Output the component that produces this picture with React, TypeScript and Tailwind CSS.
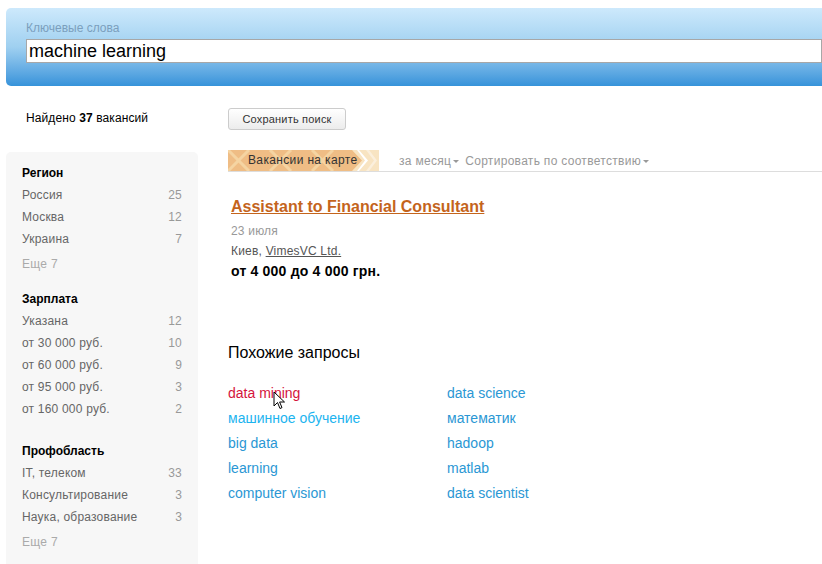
import React from "react"

const region = [
  { name: "Россия", count: 25 },
  { name: "Москва", count: 12 },
  { name: "Украина", count: 7 },
]

const salary = [
  { name: "Указана", count: 12 },
  { name: "от 30 000 руб.", count: 10 },
  { name: "от 60 000 руб.", count: 9 },
  { name: "от 95 000 руб.", count: 3 },
  { name: "от 160 000 руб.", count: 2 },
]

const prof = [
  { name: "IT, телеком", count: 33 },
  { name: "Консультирование", count: 3 },
  { name: "Наука, образование", count: 3 },
]

const similar = [
  ["data mining", "data science"],
  ["машинное обучение", "математик"],
  ["big data", "hadoop"],
  ["learning", "matlab"],
  ["computer vision", "data scientist"],
]

type Item = { name: string; count: number }

const FilterGroup = ({ title, items, more }: { title: string; items: Item[]; more?: boolean }) => (
  <div>
    <div className="text-[12px] font-bold text-black h-[22px] leading-[22px]">{title}</div>
    {items.map((it) => (
      <div key={it.name} className="flex justify-between h-[22px] leading-[22px] text-[12px] tracking-[0.2px]">
        <span className="text-[#666]">{it.name}</span>
        <span className="text-[#999]">{it.count}</span>
      </div>
    ))}
    {more && <div className="h-[28px] leading-[28px] text-[12px] text-[#aaa] tracking-[0.3px]">Еще 7</div>}
  </div>
)

const Cursor = () => (
  <svg className="absolute left-[45px] top-[10px]" width="13" height="19" viewBox="0 0 13 19">
    <path d="M1 1 L1 15 L4.5 11.5 L7 17.5 L9 16.6 L6.6 11 L11.5 11 Z" fill="#fff" stroke="#000" strokeWidth="1" strokeLinejoin="round" />
  </svg>
)

const MapButton = () => (
  <div className="relative w-[151px] h-[21px] overflow-hidden bg-[#efbd85]">
    <svg className="absolute inset-0" width="151" height="21" viewBox="0 0 151 21">
      <g stroke="#f5d4a2" strokeWidth="3">
        <line x1="0" y1="0" x2="21" y2="21" />
        <line x1="21" y1="0" x2="0" y2="21" />
        <line x1="42" y1="0" x2="63" y2="21" />
        <line x1="63" y1="0" x2="42" y2="21" />
        <line x1="84" y1="0" x2="105" y2="21" />
        <line x1="105" y1="0" x2="84" y2="21" />
        <line x1="126" y1="0" x2="147" y2="21" />
      </g>
      <path d="M124 0 L151 0 L151 21 L124 21 L134 10.5 Z" fill="#f8e4c2" />
      <path d="M129 0 L137 10.5 L129 21 L131 21 L140 10.5 L131 0 Z" fill="#fff" />
      <path d="M138 0 L146 10.5 L138 21 L141 21 L149 10.5 L141 0 Z" fill="#fbefdc" />
    </svg>
    <span className="relative block pl-[20px] text-[12px] leading-[21px] text-[#333] tracking-[0.35px]">Вакансии на карте</span>
  </div>
)

const Caret = () => <span className="inline-block ml-[2px] align-middle border-x-[3px] border-t-[3px] border-x-transparent border-t-[#999]" />

export default function App() {
  return (
    <div className="w-[822px] h-[564px] overflow-hidden bg-white font-['Liberation_Sans',Arial,sans-serif]">
      {/* Search header */}
      <div className="mt-[8px] ml-[6px] h-[78px] rounded-l-[5px] bg-gradient-to-b from-[#cde9fc] via-[#9fd0f0] to-[#3593da] pl-[20px] pt-[13px]">
        <div className="text-[12px] text-[#7b9fbd] leading-[14px] h-[18px]">Ключевые слова</div>
        <div className="h-[24px] border border-[#a7a7a7] bg-white pl-[2px] text-[18px] leading-[22px] text-black">machine learning</div>
      </div>

      <div className="flex pl-[6px]">
        {/* Left column */}
        <div className="w-[192px] shrink-0">
          <div className="h-[66px] pt-[22px] pl-[20px] text-[12px] leading-[20px] text-black tracking-[0.1px]">
            Найдено <b>37</b> вакансий
          </div>
          <div className="h-[420px] rounded-t-[5px] bg-[#f7f7f7] px-[16px] pt-[10px]">
            <FilterGroup title="Регион" items={region} more />
            <div className="h-[10px]" />
            <FilterGroup title="Зарплата" items={salary} />
            <div className="h-[20px]" />
            <FilterGroup title="Профобласть" items={prof} more />
          </div>
        </div>

        {/* Main column */}
        <div className="ml-[30px] flex-1">
          <div className="pt-[22px] h-[64px]">
            <button className="block h-[22px] w-[118px] rounded-[3px] border border-[#ccc] bg-gradient-to-b from-white to-[#ececec] text-[11px] text-[#333] tracking-[0.2px]">
              Сохранить поиск
            </button>
          </div>

          <div className="flex items-center border-b border-[#ddd] h-[22px]">
            <MapButton />
            <span className="ml-[20px] text-[12px] text-[#999] tracking-[0.3px]">за месяц<Caret /></span>
            <span className="ml-[6px] text-[12px] text-[#999] tracking-[0.3px]">Сортировать по соответствию<Caret /></span>
          </div>

          <div className="pl-[3px] pt-[24px]">
            <a className="block text-[16px] font-bold text-[#c4641c] underline leading-[22px]">Assistant to Financial Consultant</a>
            <div className="mt-[3px] text-[12px] text-[#999] leading-[20px] tracking-[0.2px]">23 июля</div>
            <div className="text-[12px] text-[#555] leading-[20px] tracking-[0.2px]">
              Киев, <span className="underline">VimesVC Ltd.</span>
            </div>
            <div className="text-[14px] font-bold text-black leading-[20px] tracking-[0.2px]">от 4 000 до 4 000 грн.</div>
          </div>

          <div className="mt-[62px] text-[16px] text-black leading-[20px]">Похожие запросы</div>

          <div className="mt-[18px] grid grid-cols-[219px_1fr] relative">
            {similar.map(([a, b], i) => (
              <React.Fragment key={a}>
                <div className="relative h-[25px] leading-[25px] text-[14px]">
                  <span className={i === 0 ? "text-[#d4143c]" : i === 1 ? "text-[#1cb4ef]" : "text-[#2a97d4]"}>{a}</span>
                  {i === 0 && <Cursor />}
                </div>
                <div className="h-[25px] leading-[25px] text-[14px] text-[#2a97d4]">{b}</div>
              </React.Fragment>
            ))}
          </div>
        </div>
      </div>
    </div>
  )
}
